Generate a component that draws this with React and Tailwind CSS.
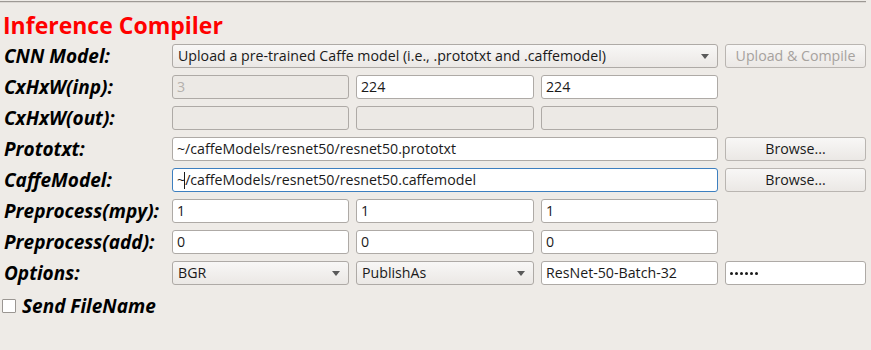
import React from "react";

const font = { fontFamily: '"Open Sans", "DejaVu Sans", sans-serif' };

const Field = ({ value = "", disabled = false, focused = false, muted = false }) => (
  <div
    className={`h-[24px] rounded-[3px] border px-[4px] flex items-center text-[14.2px] overflow-hidden whitespace-nowrap ${
      focused ? "border-[#3d7fbf]" : "border-[#aeaaa6]"
    } ${disabled ? "bg-[#ece9e5]" : "bg-white"} ${muted ? "text-[#b4b0ac]" : "text-[#1a1a1a]"}`}
  >
    {focused ? (
      <>
        <span>{value.slice(0, 1)}</span>
        <span className="w-px h-[17px] bg-[#1a1a1a] -ml-[1px]" />
        <span>{value.slice(1)}</span>
      </>
    ) : (
      value
    )}
  </div>
);

const Combo = ({ value, span = "" }) => (
  <div
    className={`${span} h-[24px] rounded-[3px] border border-[#aeaaa6] bg-gradient-to-b from-[#f8f7f6] to-[#ebe8e5] pl-[5px] pr-[8px] flex items-center justify-between text-[14.2px] text-[#1a1a1a] whitespace-nowrap`}
  >
    <span>{value}</span>
    <svg width="8" height="5" viewBox="0 0 8 5">
      <path d="M0 0h8L4 5z" fill="#5a5a5a" />
    </svg>
  </div>
);

const Button = ({ children, disabled = false }) => (
  <div
    className={`h-[24px] rounded-[3px] border border-[#b9b5b1] bg-gradient-to-b from-[#f8f7f6] to-[#ebe8e5] flex items-center justify-center text-[14.2px] ${
      disabled ? "text-[#a6a29e]" : "text-[#1a1a1a]"
    }`}
  >
    {children}
  </div>
);

const Label = ({ children }) => (
  <div className="h-[24px] flex items-center pl-[4px] text-[19px] font-bold italic text-black whitespace-nowrap">
    {children}
  </div>
);

export default function App() {
  return (
    <div className="w-[871px] h-[350px] bg-[#eeebe7] overflow-hidden" style={font}>
      <div className="pt-px">
        <div className="w-[866px] h-px bg-[#9d9995]" />
        <div className="w-[866px] h-px bg-[#dcd8d4]" />
      </div>
      <div className="h-[41px] flex items-center pl-[3px] pt-[3px] text-[23px] font-bold text-[#ff0000] leading-none">
        Inference Compiler
      </div>

      <div className="grid grid-cols-[165px_177px_178px_177px_141px] gap-x-[7px] gap-y-[7px]">
        <Label>CNN Model:</Label>
        <Combo value="Upload a pre-trained Caffe model (i.e., .prototxt and .caffemodel)" span="col-span-3" />
        <Button disabled>Upload &amp; Compile</Button>

        <Label>CxHxW(inp):</Label>
        <Field value="3" disabled muted />
        <Field value="224" />
        <Field value="224" />
        <div />

        <Label>CxHxW(out):</Label>
        <Field disabled />
        <Field disabled />
        <Field disabled />
        <div />

        <Label>Prototxt:</Label>
        <div className="col-span-3">
          <Field value="~/caffeModels/resnet50/resnet50.prototxt" />
        </div>
        <Button>Browse...</Button>

        <Label>CaffeModel:</Label>
        <div className="col-span-3">
          <Field value="~/caffeModels/resnet50/resnet50.caffemodel" focused />
        </div>
        <Button>Browse...</Button>

        <Label>Preprocess(mpy):</Label>
        <Field value="1" />
        <Field value="1" />
        <Field value="1" />
        <div />

        <Label>Preprocess(add):</Label>
        <Field value="0" />
        <Field value="0" />
        <Field value="0" />
        <div />

        <Label>Options:</Label>
        <Combo value="BGR" />
        <Combo value="PublishAs" />
        <Field value="ResNet-50-Batch-32" />
        <div className="h-[24px] rounded-[3px] border border-[#aeaaa6] bg-white px-[4px] flex items-center gap-[2px]">
          {[0, 1, 2, 3, 4, 5].map((i) => (
            <span key={i} className="w-[3px] h-[3px] rounded-full bg-[#1a1a1a]" />
          ))}
        </div>
      </div>

      <div className="mt-[10px] h-[22px] flex items-center gap-[6px] pl-[2px]">
        <div className="w-[14px] h-[14px] border border-[#9a9692] bg-white rounded-[1px]" />
        <span className="text-[19px] font-bold italic text-black">Send FileName</span>
      </div>
    </div>
  );
}
